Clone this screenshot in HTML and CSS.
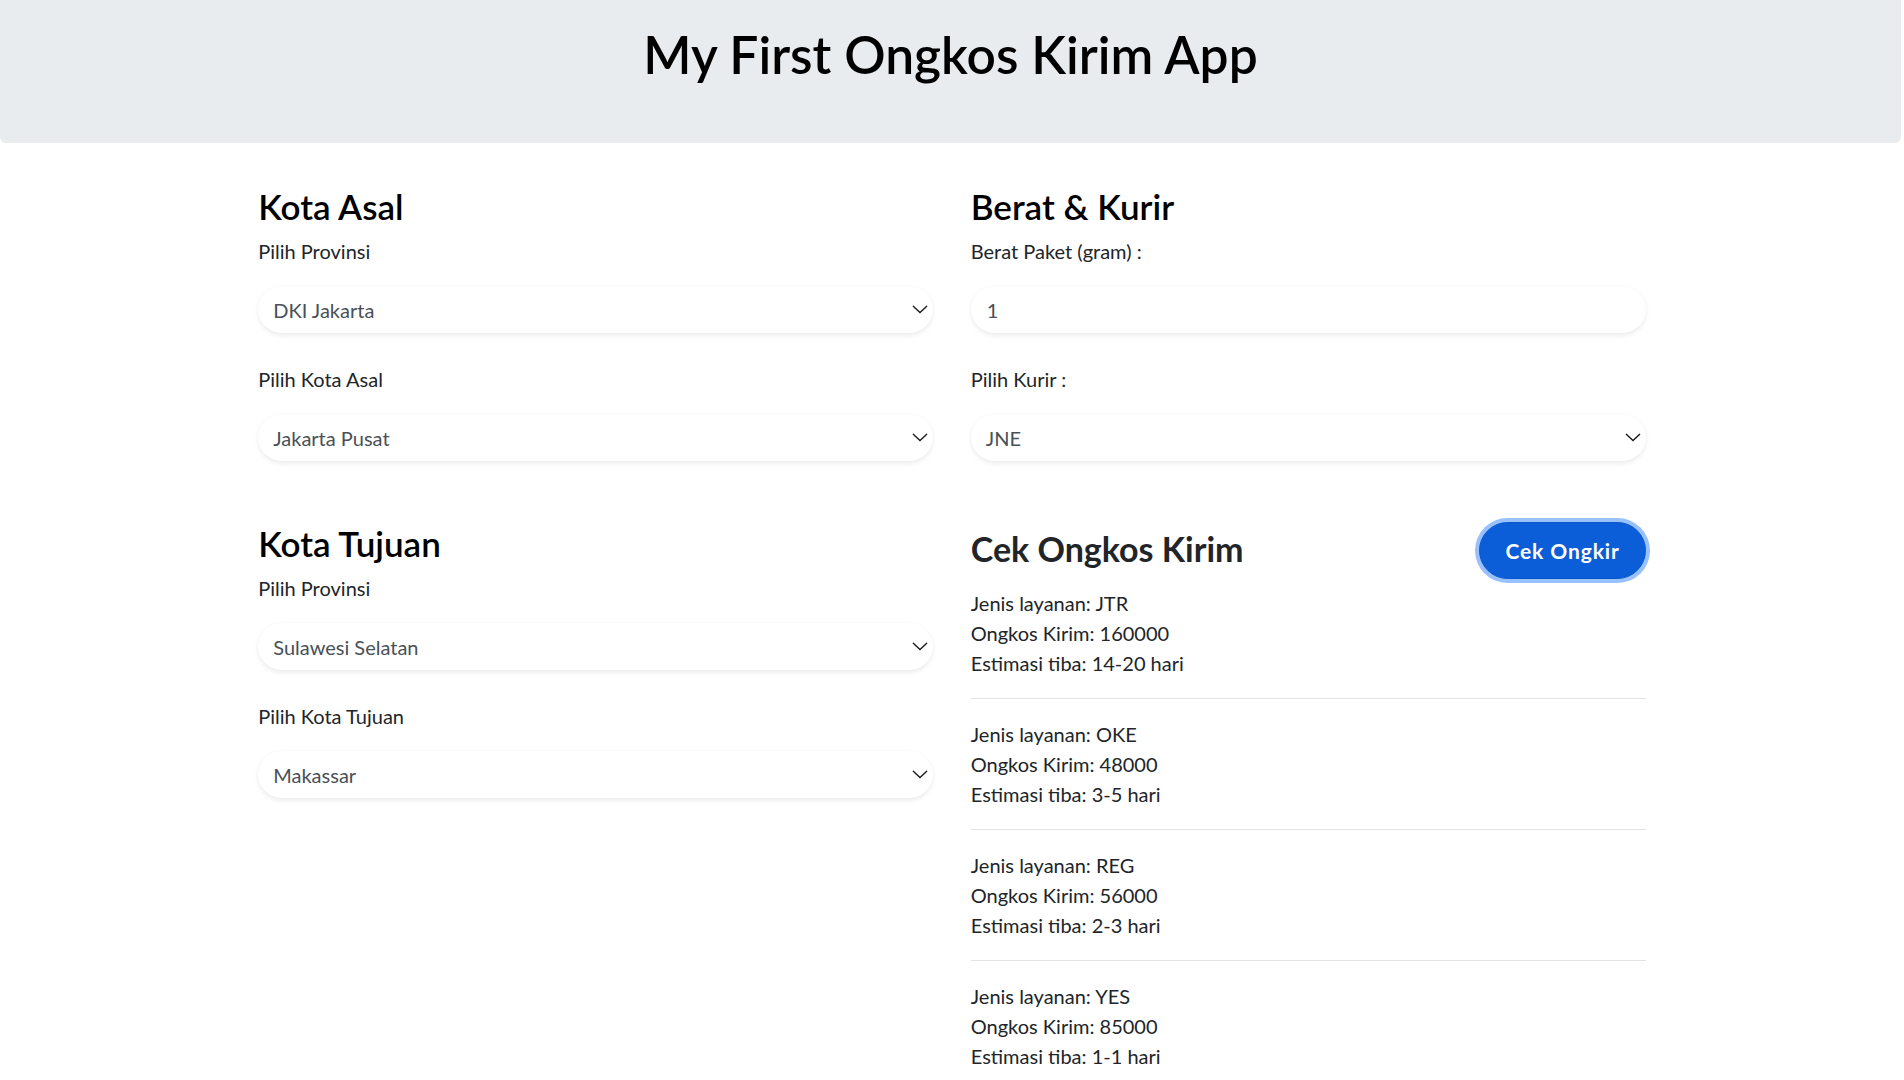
FILE: index.html
```html
<!DOCTYPE html>
<html lang="id">
<head>
<meta charset="utf-8">
<title>My First Ongkos Kirim App</title>
<link rel="stylesheet" href="styles.css">
</head>
<body>
<header class="hero">
  <h1 class="hero-title">My First Ongkos Kirim App</h1>
</header>
<main class="container">
  <div class="row">
    <section class="col">
      <h3 class="section-title">Kota Asal</h3>
      <div class="field">
        <label class="field-label">Pilih Provinsi</label>
        <div class="select"><span>DKI Jakarta</span><svg class="chevron" viewBox="0 0 16 9"><polyline points="1,1 8,7.6 15,1"/></svg></div>
      </div>
      <div class="field">
        <label class="field-label">Pilih Kota Asal</label>
        <div class="select"><span>Jakarta Pusat</span><svg class="chevron" viewBox="0 0 16 9"><polyline points="1,1 8,7.6 15,1"/></svg></div>
      </div>
    </section>
    <section class="col">
      <h3 class="section-title">Berat &amp; Kurir</h3>
      <div class="field">
        <label class="field-label">Berat Paket (gram) :</label>
        <div class="select input"><span>1</span></div>
      </div>
      <div class="field">
        <label class="field-label">Pilih Kurir :</label>
        <div class="select"><span>JNE</span><svg class="chevron" viewBox="0 0 16 9"><polyline points="1,1 8,7.6 15,1"/></svg></div>
      </div>
    </section>
  </div>
  <div class="row">
    <section class="col">
      <h3 class="section-title">Kota Tujuan</h3>
      <div class="field">
        <label class="field-label">Pilih Provinsi</label>
        <div class="select"><span>Sulawesi Selatan</span><svg class="chevron" viewBox="0 0 16 9"><polyline points="1,1 8,7.6 15,1"/></svg></div>
      </div>
      <div class="field">
        <label class="field-label">Pilih Kota Tujuan</label>
        <div class="select"><span>Makassar</span><svg class="chevron" viewBox="0 0 16 9"><polyline points="1,1 8,7.6 15,1"/></svg></div>
      </div>
    </section>
    <section class="col">
      <div class="result-head">
        <h3 class="result-title">Cek Ongkos Kirim</h3>
        <button class="btn" type="button">Cek Ongkir</button>
      </div>
      <div class="result">
        <p>Jenis layanan: JTR</p>
        <p>Ongkos Kirim: 160000</p>
        <p>Estimasi tiba: 14-20 hari</p>
      </div>
      <hr class="divider">
      <div class="result">
        <p>Jenis layanan: OKE</p>
        <p>Ongkos Kirim: 48000</p>
        <p>Estimasi tiba: 3-5 hari</p>
      </div>
      <hr class="divider">
      <div class="result">
        <p>Jenis layanan: REG</p>
        <p>Ongkos Kirim: 56000</p>
        <p>Estimasi tiba: 2-3 hari</p>
      </div>
      <hr class="divider">
      <div class="result">
        <p>Jenis layanan: YES</p>
        <p>Ongkos Kirim: 85000</p>
        <p>Estimasi tiba: 1-1 hari</p>
      </div>
      <hr class="divider">
    </section>
  </div>
</main>
</body>
</html>
```

FILE: styles.css
```css
* {
  box-sizing: border-box;
}

html,
body {
  margin: 0;
  padding: 0;
}

body {
  font-family: Lato, "Noto Sans", sans-serif;
  font-size: 20px;
  line-height: 30px;
  color: #212529;
  background: #fff;
}

.hero {
  height: 143px;
  margin: 0 3px 42px 0;
  padding-top: 24px;
  background: #e9ecef;
  border-radius: 0 0 6px 6px;
  text-align: center;
}

.hero-title {
  margin: 0;
  font-size: 51.5px;
  line-height: 60px;
  font-weight: 600;
  color: #000;
}

.container {
  width: 1387.5px;
  margin: 0 auto;
}

.row {
  display: grid;
  grid-template-columns: 1fr 1fr;
  column-gap: 37.5px;
}

.row + .row {
  margin-top: 30px;
}

.section-title {
  margin: 0 0 9px;
  font-size: 35px;
  line-height: 42px;
  font-weight: 600;
  color: #000;
}

.field {
  margin-bottom: 31px;
}

.field-label {
  display: block;
  margin-bottom: 20px;
}

.select {
  display: flex;
  align-items: center;
  justify-content: space-between;
  height: 47px;
  padding: 0 5px 0 15px;
  background: #fff;
  border-radius: 50rem;
  box-shadow: 0 2.5px 5px rgba(0, 0, 0, 0.075), 0 0 2px rgba(0, 0, 0, 0.03);
  color: #495057;
}

.input {
  padding-left: 16px;
}

.chevron {
  width: 16px;
  height: 9px;
  fill: none;
  stroke: #1b1b1b;
  stroke-width: 1.4;
}

.result-head {
  display: flex;
  align-items: center;
  justify-content: space-between;
  margin-bottom: 9px;
}

.result-title {
  margin: 0 0 4px;
  font-size: 34px;
  line-height: 42px;
  font-weight: 700;
  color: #212529;
}

.btn {
  height: 57px;
  padding: 0 25px;
  font-family: inherit;
  font-size: 21px;
  line-height: 30px;
  letter-spacing: 0.9px;
  font-weight: 700;
  color: #fff;
  background: #0b5ed7;
  border: 1px solid #0a58ca;
  border-radius: 50rem;
  box-shadow: 0 0 0 4px rgba(49, 132, 253, 0.5);
  cursor: pointer;
}

.result p {
  margin: 0;
}

.divider {
  margin: 20px 0;
  border: 0;
  border-top: 1px solid #e3e3e3;
}
```
